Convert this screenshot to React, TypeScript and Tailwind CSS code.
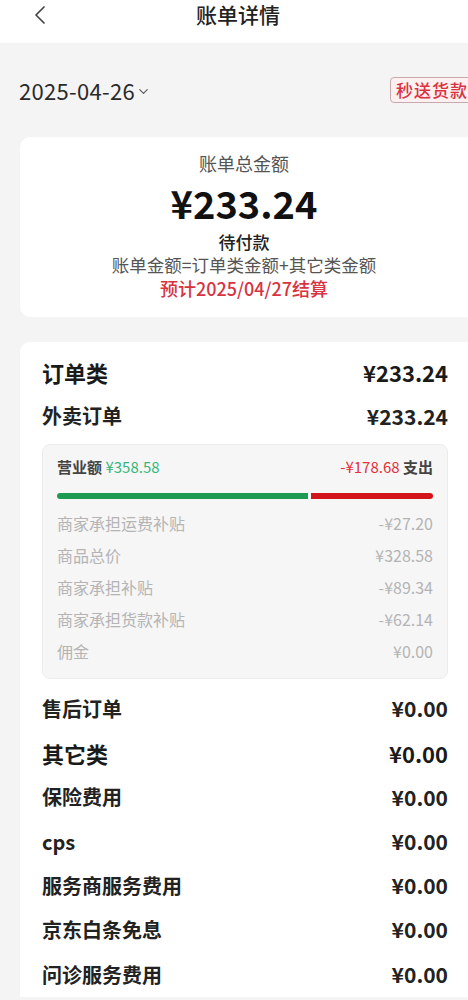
import { ChevronLeft, ChevronDown } from 'lucide-react'

const FONT = { fontFamily: '"Noto Sans CJK SC", "Noto Sans", sans-serif' }

const DETAILS = [
  { label: '商家承担运费补贴', value: '-¥27.20' },
  { label: '商品总价', value: '¥328.58' },
  { label: '商家承担补贴', value: '-¥89.34' },
  { label: '商家承担货款补贴', value: '-¥62.14' },
  { label: '佣金', value: '¥0.00' },
]

const OTHERS = [
  { label: '保险费用', value: '¥0.00' },
  { label: 'cps', value: '¥0.00' },
  { label: '服务商服务费用', value: '¥0.00' },
  { label: '京东白条免息', value: '¥0.00' },
  { label: '问诊服务费用', value: '¥0.00' },
]

function Row({ label, value, bold }: { label: string; value: string; bold?: boolean }) {
  return (
    <div className="flex h-[44.3px] items-center justify-between">
      <span className={bold ? 'text-[22px] font-bold text-[#1a1a1a]' : 'text-[20px] font-semibold text-[#222]'}>{label}</span>
      <span className={bold ? 'text-[22px] font-bold text-[#1a1a1a]' : 'text-[21px] font-semibold text-[#222]'}>{value}</span>
    </div>
  )
}

export default function App() {
  return (
    <div className="h-[1000px] w-[468px] overflow-hidden bg-[#f4f4f4]" style={FONT}>
      {/* header */}
      <div className="relative h-[43px] bg-white">
        <ChevronLeft size={32} strokeWidth={1.3} className="absolute left-[24px] top-[-1px] text-[#444]" />
        <div className="flex h-[30px] items-center justify-center pl-[8px] text-[21px] font-medium text-[#222]">账单详情</div>
      </div>

      {/* date row */}
      <div className="flex h-[94px] items-center pl-[19px]">
        <span className="text-[22px] tracking-[0.3px] text-[#2a2a2a]">2025-04-26</span>
        <ChevronDown size={15} strokeWidth={1.8} className="ml-[1px] mt-[3px] text-[#555]" />
        <span className="ml-auto mr-[-4px] rounded-[4px] border border-[#c9a9ad] bg-[#fdf0f1] pl-[5px] pr-[3px] text-[17px] font-medium leading-[24px] tracking-[1px] text-[#d8333f]">
          秒送货款
        </span>
      </div>

      {/* total card */}
      <div className="ml-[20px] flex flex-col items-center rounded-l-[10px] bg-white pb-[18px] pt-[15px]">
        <div className="text-[18px] leading-[22px] text-[#555]">账单总金额</div>
        <div className="mt-[6px] text-[38px] font-bold leading-[46px] text-[#111]">¥233.24</div>
        <div className="mt-[4px] text-[17px] font-medium leading-[23px] text-[#222]">待付款</div>
        <div className="text-[17.5px] leading-[23px] text-[#555]">账单金额=订单类金额+其它类金额</div>
        <div className="mt-[1px] text-[18px] font-medium leading-[22px] text-[#d8333f]">预计2025/04/27结算</div>
      </div>

      {/* detail card */}
      <div className="ml-[20px] mt-[25px] rounded-tl-[10px] bg-white pl-[22px] pr-[20px] pt-[8px]">
        <Row label="订单类" value="¥233.24" bold />
        <Row label="外卖订单" value="¥233.24" />

        <div className="mt-[5px] rounded-[8px] border border-[#ececec] bg-[#f6f6f7] px-[14px] pb-[11px] pt-[9px]">
          <div className="flex h-[28px] items-center justify-between text-[15px]">
            <span className="font-semibold text-[#444]">
              营业额 <span className="font-normal text-[#36b77a]">¥358.58</span>
            </span>
            <span className="font-semibold text-[#444]">
              <span className="font-normal text-[#e2323a]">-¥178.68</span> 支出
            </span>
          </div>
          <div className="mt-[11px] flex h-[6px] gap-[3px]">
            <div className="flex-[252] rounded-l-full bg-[#1f9a52]" />
            <div className="flex-[122] rounded-r-full bg-[#d3141a]" />
          </div>
          <div className="mt-[8px]">
            {DETAILS.map(d => (
              <div key={d.label} className="flex h-[32px] items-center justify-between text-[16px] text-[#b4b4b4]">
                <span>{d.label}</span>
                <span>{d.value}</span>
              </div>
            ))}
          </div>
        </div>

        <div className="mt-[8px]">
          <Row label="售后订单" value="¥0.00" />
          <Row label="其它类" value="¥0.00" bold />
          {OTHERS.map(o => (
            <Row key={o.label} label={o.label} value={o.value} />
          ))}
        </div>
      </div>
    </div>
  )
}
